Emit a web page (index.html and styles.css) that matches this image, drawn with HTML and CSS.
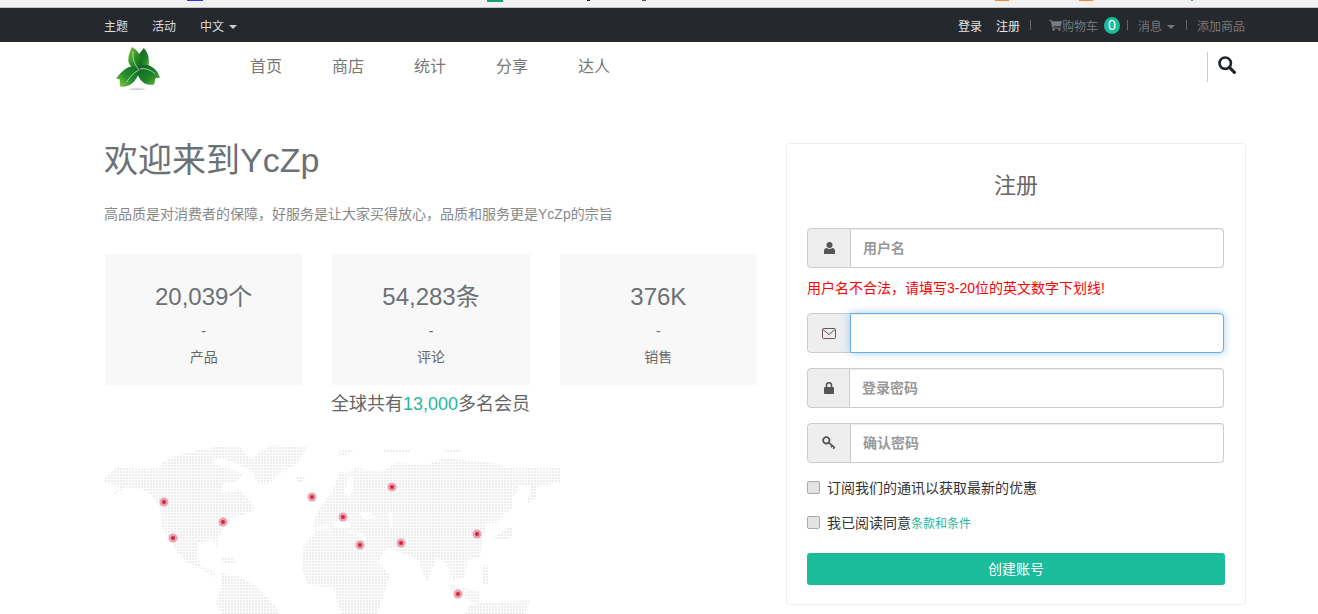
FILE: index.html
```html
<!DOCTYPE html>
<html lang="zh">
<head>
<meta charset="utf-8">
<title>YcZp</title>
<link rel="stylesheet" href="styles.css">
</head>
<body>
<div class="strip">
  <svg class="strip-art" width="1318" height="7" viewBox="0 0 1318 7">
    <rect x="187" width="16" height="1" fill="#3535d8"/>
    <rect x="487" width="16" height="2" fill="#12a36c"/>
    <rect x="587" width="3" height="1" fill="#222"/>
    <rect x="642" width="4" height="1" fill="#555"/>
    <rect x="995" width="14" height="1" fill="#f08a3c"/>
    <rect x="1079" width="14" height="1" fill="#f08a3c"/>
    <rect x="1191" width="2" height="1" fill="#4a9ad4"/>
  </svg>
</div>
<header class="topbar">
  <div class="wrap topbar-in">
    <nav class="top-left">
      <a>主题</a><a>活动</a><a>中文<i class="caret"></i></a>
    </nav>
    <nav class="top-right">
      <a class="light">登录</a><a class="light reg">注册</a><span class="sep first"></span>
      <a class="cart">
        <svg class="cart-icon" width="13" height="12" viewBox="0 0 13 12"><path d="M0 .8h2.3l.5 1.4H13l-1.2 5H4.2l.3 1.2h7.2v1H3.400L1.600 1.800H0z" fill="#7d7d7d"/><circle cx="4.600" cy="10.600" r="1.200" fill="#7d7d7d"/><circle cx="10.400" cy="10.600" r="1.200" fill="#7d7d7d"/></svg>购物车</a>
      <span class="badge">0</span><span class="sep tight-left"></span>
      <a>消息<i class="caret dim"></i></a><span class="sep wide"></span>
      <a>添加商品</a>
    </nav>
  </div>
</header>
<div class="navbar">
  <div class="wrap navbar-in">
    <svg class="logo" width="46" height="46" viewBox="0 0 48 48">
      <defs>
        <linearGradient id="lg1" x1="0" y1="0" x2="1" y2="1"><stop offset="0" stop-color="#8cc63f"/><stop offset=".5" stop-color="#2a8f28"/><stop offset="1" stop-color="#0b5c22"/></linearGradient>
        <linearGradient id="lg2" x1="1" y1="0" x2="0" y2="1"><stop offset="0" stop-color="#0f6a26"/><stop offset=".55" stop-color="#26902a"/><stop offset="1" stop-color="#9ed048"/></linearGradient>
        <linearGradient id="lg3" x1="0" y1="0" x2="1" y2="1"><stop offset="0" stop-color="#0b5f24"/><stop offset=".6" stop-color="#1f8328"/><stop offset="1" stop-color="#7fbe3c"/></linearGradient>
      </defs>
      <ellipse cx="23" cy="46" rx="9" ry="1" fill="#cfcfcf"/>
      <path d="M30 3c5 5 7 13 4 24-6-2-10-5-11-10 0-6 4-10 7-14z" fill="url(#lg3)"/>
      <path d="M18 2c8 5 13 14 9 25C17 25 13 20 14 13c.5-4 2-8 4-11z" fill="url(#lg1)"/>
      <path d="M26 24C16 18 7 27 1 35l4 1 0 7c10 3 20-7 21-19z" fill="url(#lg2)"/>
      <path d="M22 23c9-5 17-2 22 5l3 6-5 1-1 6c-11 3-18-6-19-18z" fill="url(#lg3)"/>
      <path d="M19 7c-1 7 1 13 6 19M25 26c-6 3-10 8-13 13M26 25c6-1 11 1 16 5" fill="none" stroke="#e4f3d2" stroke-width=".7"/>
    </svg>
    <nav class="mainnav"><a>首页</a><a>商店</a><a>统计</a><a>分享</a><a>达人</a></nav>
    <div class="search-box">
      <svg width="18" height="18" viewBox="0 0 18 18"><circle cx="7.200" cy="7.200" r="5.700" fill="none" stroke="#23272b" stroke-width="2.600"/><path d="M11.400 11.400l5 5" stroke="#23272b" stroke-width="3.200" stroke-linecap="round"/></svg>
    </div>
  </div>
</div>
<main class="wrap content">
  <section class="intro">
    <h1>欢迎来到YcZp</h1>
    <p class="lead">高品质是对消费者的保障，好服务是让大家买得放心，品质和服务更是YcZp的宗旨</p>
    <div class="stats">
      <div class="stat"><div class="num">20,039个</div><div class="dash">-</div><div class="lbl">产品</div></div>
      <div class="stat"><div class="num">54,283条</div><div class="dash">-</div><div class="lbl">评论</div></div>
      <div class="stat"><div class="num">376K</div><div class="dash">-</div><div class="lbl">销售</div></div>
    </div>
    <p class="members">全球共有<span class="teal">13,000</span>多名会员</p>
    <svg class="map" width="456" height="170" viewBox="105 444 456 170">
      <defs>
        <pattern id="dots" x="0" y="0" width="3" height="3" patternUnits="userSpaceOnUse"><rect width="2" height="2" fill="#ececec"/></pattern>
      </defs>
      <g fill="url(#dots)">
        <path d="M105 477L117 467L140 469L162 468L163 462L178 455L200 450L230 450L232 457L213 460L215 465L233 470L243 475L233 483L223 483L222 493L240 490L252 503L254 510L243 515L232 518L223 528L217 540L217 548L213 540L197 543L197 558L203 567L213 570L217 578L200 568L187 562L178 553L172 543L162 527L160 507L153 497L143 490L127 487L113 495L110 497L120 488L105 482Z"/>
        <path d="M211 447L240 447L252 460L255 472L232 462L215 455Z"/>
        <path d="M275 445L307 447L297 463L280 473L268 484L258 484L253 473L250 460L262 450Z"/>
        <path d="M296 477L305 477L303 482L298 482Z"/>
        <path d="M222 558L232 558L236 562L222 562ZM225 561L235 561L235 563L225 563Z"/>
        <path d="M222 573L240 577L257 587L277 608L278 614L222 614L216 603L222 587Z"/>
        <path d="M303 547L317 530L340 528L352 533L367 541L375 560L390 575L385 590L377 614L341 614L335 594L333 587L308 585L303 572Z"/>
        <path d="M313 527L316 515L322 505L331 493L340 472L347 473L356 468L380 472L396 463L427 465L443 458L493 463L507 468L560 468L560 482L537 487L537 497L528 503L527 495L522 487L512 498L513 508L503 515L497 523L487 523L482 540L480 557L467 560L465 577L453 580L447 565L437 557L430 573L428 583L423 573L418 560L402 553L387 547L377 563L368 543L363 533L330 530L330 525L313 527Z"/>
        <path d="M507 528L512 528L512 537L503 540L493 538Z"/>
        <path d="M483 565L488 565L488 584L483 584Z"/>
        <path d="M450 585L480 592L478 605L470 600L462 595L452 592Z"/>
        <path d="M470 604L530 600L525 614L465 614Z"/>
        <path d="M338 451L350 450L355 452L340 456ZM383 449L410 449L410 452L383 452ZM445 449L460 449L460 453L445 453Z"/>
      </g>
      <g class="seas">
        <path d="M347 478L353 476L353 490L349 498L345 494Z"/>
        <path d="M358 514L368 512L376 517L366 520Z"/>
        <path d="M388 512L393 512L393 527L389 528Z"/>
        <path d="M519 486L531 486L531 494L526 500L521 496Z"/>
        <path d="M334 521L350 523L350 528L334 527Z"/>
      </g>
      <g class="pins">
        <circle cx="164" cy="502" r="4.500"/><circle class="core" cx="164" cy="502" r="2"/>
        <circle cx="173" cy="538" r="4.500"/><circle class="core" cx="173" cy="538" r="2"/>
        <circle cx="223" cy="522" r="4.500"/><circle class="core" cx="223" cy="522" r="2"/>
        <circle cx="312" cy="497" r="4.500"/><circle class="core" cx="312" cy="497" r="2"/>
        <circle cx="343" cy="517" r="4.500"/><circle class="core" cx="343" cy="517" r="2"/>
        <circle cx="360" cy="545" r="4.500"/><circle class="core" cx="360" cy="545" r="2"/>
        <circle cx="401" cy="543" r="4.500"/><circle class="core" cx="401" cy="543" r="2"/>
        <circle cx="392" cy="487" r="4.500"/><circle class="core" cx="392" cy="487" r="2"/>
        <circle cx="477" cy="534" r="4.500"/><circle class="core" cx="477" cy="534" r="2"/>
        <circle cx="458" cy="594" r="4.500"/><circle class="core" cx="458" cy="594" r="2"/>
      </g>
    </svg>
  </section>
  <section class="card">
    <h2>注册</h2>
    <form class="form">
      <div class="group">
        <span class="addon"><svg width="11" height="12" viewBox="0 0 11 12"><circle cx="5.500" cy="3.100" r="3" fill="#555"/><path d="M0 12V8.600C0 7 1.400 6 2.700 6c.8.6 1.800 1 2.800 1s2-.4 2.800-1C9.600 6 11 7 11 8.600V12z" fill="#555"/></svg></span>
        <input class="field" type="text" placeholder="用户名">
      </div>
      <p class="error">用户名不合法，请填写3-20位的英文数字下划线!</p>
      <div class="group tight">
        <span class="addon"><svg class="envelope" width="14" height="11" viewBox="0 0 14 11"><rect x=".5" y=".5" width="13" height="10" rx="1" fill="none" stroke="#6b5560"/><path d="M1 1.500l6 5 6-5" fill="none" stroke="#6b5560"/></svg></span>
        <input class="field focus" type="text">
      </div>
      <div class="group">
        <span class="addon narrow"><svg width="10" height="12" viewBox="0 0 10 12"><path d="M2.500 5V3.300a2.500 2.500 0 015 0V5" fill="none" stroke="#555" stroke-width="1.500"/><rect y="5" width="10" height="7" rx="1" fill="#555"/></svg></span>
        <input class="field" type="password" placeholder="登录密码">
      </div>
      <div class="group">
        <span class="addon"><svg width="14" height="14" viewBox="0 0 13 13"><circle cx="4" cy="4" r="3" fill="none" stroke="#555" stroke-width="1.700"/><path d="M6 6l6 5M9.500 9l-1.300 1.500M11.500 10.500l-1 1.500" fill="none" stroke="#555" stroke-width="1.500"/></svg></span>
        <input class="field" type="password" placeholder="确认密码">
      </div>
      <label class="check first-check"><input type="checkbox"><span>订阅我们的通讯以获取最新的优惠</span></label>
      <label class="check"><input type="checkbox"><span>我已阅读同意<a class="terms">条款和条件</a></span></label>
      <button class="submit" type="button"><span class="submit-label">创建账号</span></button>
    </form>
  </section>
</main>
</body>
</html>
```

FILE: styles.css
```css
* { box-sizing: border-box; }
html, body { margin: 0; padding: 0; }
body {
  font-family: "Liberation Sans", "Noto Sans CJK SC", sans-serif;
  font-size: 14px;
  color: #333;
  background: #fff;
  overflow: hidden;
  height: 614px;
}
.wrap { margin-left: 104px; width: 1142px; }
.strip { height: 8px; background: #f1f1f1; border-bottom: 1px solid #c4c4c4; }
.strip-art { display: block; }

.topbar { height: 34px; background: #25282d; font-size: 12px; }
.topbar-in { display: flex; justify-content: space-between; align-items: center; height: 100%; width: 1141px; }
.top-left { display: flex; gap: 24px; color: #ddd; }
.top-right { display: flex; align-items: center; color: #777; }
.top-right .light { color: #e6e6e6; }
.top-right .reg { margin-left: 14px; }
.caret {
  display: inline-block; margin-left: 5px; vertical-align: 2px;
  border-top: 4px solid #ccc; border-left: 4px solid transparent; border-right: 4px solid transparent;
}
.caret.dim { border-top-color: #777; }
.sep { width: 1px; height: 10px; background: #666; margin: 0 10px; }
.sep.first { margin: 0 18px 0 10px; }
.sep.tight-left { margin: 0 10px 0 7px; }
.sep.wide { margin: 0 10px 0 11px; }
.cart { display: flex; align-items: center; }
.cart-icon { display: block; }
.badge {
  width: 16px; height: 17px; border-radius: 50%; margin-left: 6px;
  background: #1abc9c; color: #fff; text-align: center; line-height: 17px; font-size: 14px;
}

.navbar-in { display: flex; height: 60px; align-items: flex-start; }
.logo { display: block; margin: 3px 0 0 11px; flex: none; }
.mainnav { display: flex; gap: 50px; margin: 14px 0 0 89px; font-size: 16px; line-height: 21px; color: #777; }
.search-box { margin: 10px 0 0 auto; width: 39px; height: 30px; border-left: 1px solid #ccc; padding: 4px 0 0 10px; }
.search-box svg { display: block; }

.content { display: flex; gap: 29px; padding-top: 41px; }
.intro { width: 653px; flex: none; }
h1 { margin: 0; font-size: 34px; line-height: 34px; font-weight: 400; color: #6b7175; }
.lead { margin: 27px 0 0; line-height: 20px; color: #888; }
.stats { display: grid; grid-template-columns: repeat(3, 1fr); gap: 30px; margin-top: 30px; padding-left: 1px; }
.stat { height: 131px; background: #f8f8f8; text-align: center; padding-top: 28px; }
.num { font-size: 24px; line-height: 30px; color: #6b7175; }
.dash { margin-top: 9px; line-height: 20px; color: #666; }
.lbl { margin-top: 6px; line-height: 20px; color: #666; }
.members { margin: 6px 0 0; text-align: center; font-size: 18px; line-height: 26px; color: #666; }
.teal { color: #1fb6a0; }
.map { display: block; margin: 27px 0 0 1px; }
.seas path { fill: #fff; }
.pins circle { fill: #e9a3af; }
.pins .core { fill: #d8203f; }

.card { width: 460px; height: 462px; border: 1px solid #eee; border-radius: 3px; padding: 27px 20px 0; flex: none; }
h2 { margin: 0; text-align: center; font-size: 22px; line-height: 30px; font-weight: 400; color: #666; }
.form { margin-top: 27px; }
.group { display: flex; height: 40px; width: 417px; margin-bottom: 15px; }
.addon {
  flex: none; width: 44px; display: flex; align-items: center; justify-content: center;
  background: #eee; border: 1px solid #ccc; border-radius: 4px 0 0 4px;
}
.addon.narrow { width: 43px; }
.field {
  flex: 1; min-width: 0; height: 40px; padding: 0 12px; border: 1px solid #ccc; border-left: 0;
  border-radius: 0 4px 4px 0; font: inherit; color: #555; outline: 0;
  box-shadow: inset 0 1px 1px rgba(0,0,0,.075);
}
.field::placeholder { color: #999; font-weight: 700; opacity: 1; }
.field.focus { border: 1px solid #66afe9; box-shadow: inset 0 1px 1px rgba(0,0,0,.075), 0 0 8px rgba(102,175,233,.6); margin-left: -1px; position: relative; }
.envelope { display: block; margin-top: 1px; }
.error { margin: -5px 0 15px; line-height: 20px; color: #f00; }
.check { display: flex; align-items: center; height: 20px; margin-bottom: 15px; color: #333; }
.check input {
  appearance: none; width: 13px; height: 13px; margin: 0 7px 0 0; flex: none;
  background: #e4e4e4; border: 1px solid #a9a9a9; border-radius: 2px;
}
.first-check { margin-top: -1px; }
.terms { font-size: 12px; color: #1fb6a0; }
.submit {
  display: block; width: 418px; height: 32px; margin-top: 21px; padding: 0 0 2px; border: 0; border-radius: 3px;
  background: #1abc9c; color: #fff; font: inherit;
}
```
